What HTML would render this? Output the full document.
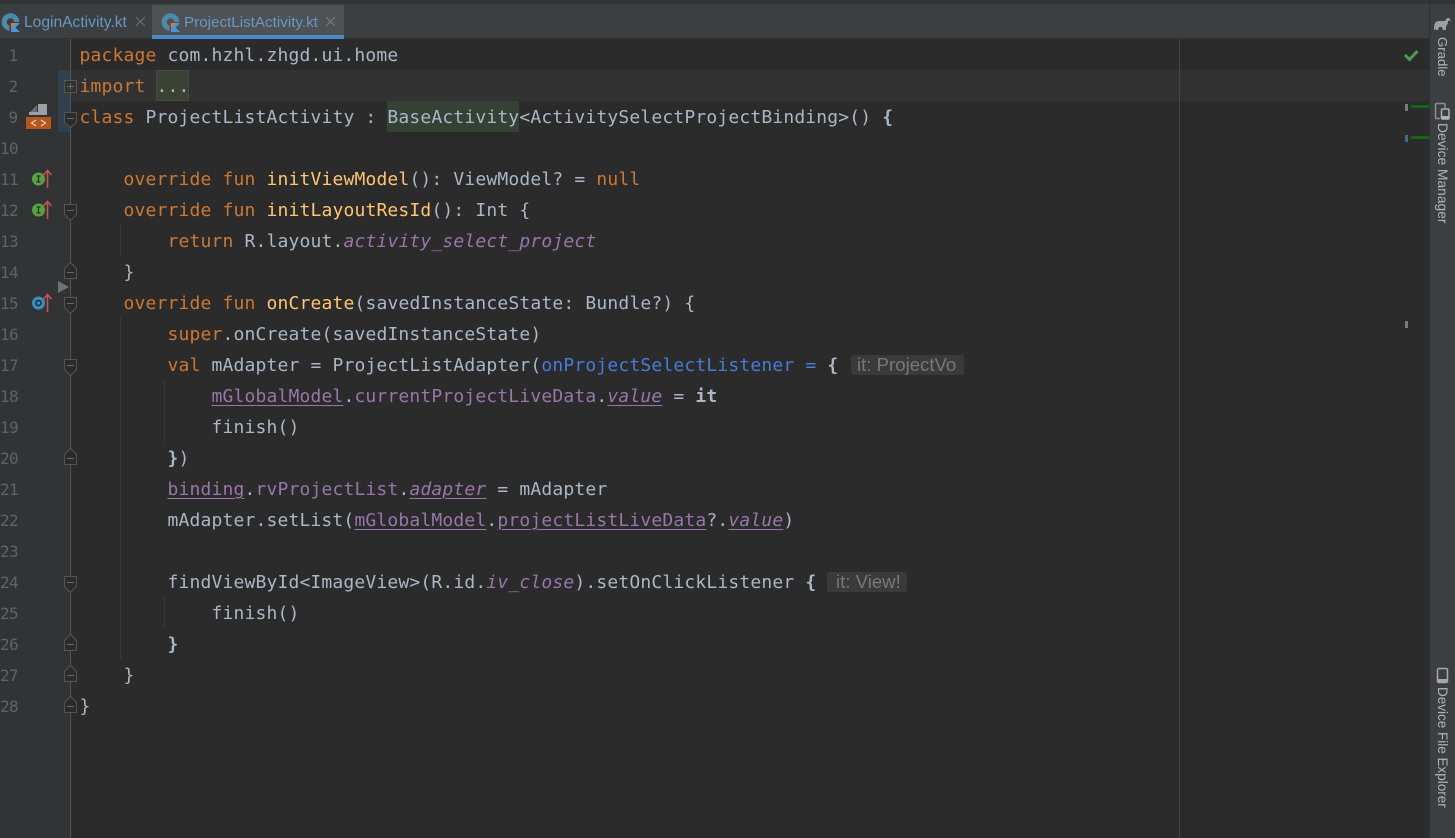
<!DOCTYPE html>
<html><head><meta charset="utf-8"><style>
html,body{margin:0;padding:0;background:#2b2b2b}
#r{position:relative;width:1455px;height:838px;overflow:hidden;background:#2b2b2b}
.a{position:absolute}
.l{position:absolute;left:79.5px;height:31px;line-height:31px;margin-top:1px;font-family:"DejaVu Sans Mono","Liberation Mono",monospace;font-size:18px;letter-spacing:.16px;color:#a9b7c6;white-space:pre}
.k{color:#cc7832}.f{color:#ffc66d}.p{color:#9876aa}.i{font-style:italic}.u{text-decoration:underline;text-underline-offset:3px;text-decoration-thickness:1px}
.b{font-weight:bold}.n{color:#467cda}
.g{position:absolute;width:17.5px;text-align:right;left:0;height:31px;line-height:31px;margin-top:1px;font-family:"DejaVu Sans Mono",monospace;font-size:16px;letter-spacing:-.6px;color:#606366}
.t{position:absolute;top:14px;font:15.6px/18px "Liberation Sans",sans-serif;color:#6a97c0;white-space:nowrap}
.h{position:absolute;height:20px;background:#3a3a3a;border-radius:3px;color:#787878;font:18.6px/20px "Liberation Sans",sans-serif;padding:0 6px;box-sizing:border-box;white-space:nowrap}
.v{position:absolute;writing-mode:vertical-rl;font:13.7px/14px "Liberation Sans",sans-serif;color:#b4b4b4;white-space:nowrap;left:1435px}
.ig{position:absolute;width:1px;background:#393939}
svg{position:absolute;overflow:visible}
</style></head><body><div id="r">

<div class="a" style="left:0;top:39px;width:71px;height:799px;background:#313335"></div>
<div class="a" style="left:71px;top:70px;width:1358px;height:31px;background:#323232"></div>
<div class="a" style="left:58px;top:70px;width:12px;height:62px;background:#2f414e"></div>
<div class="a" style="left:70px;top:39px;width:1px;height:799px;background:#555555"></div>
<div class="a" style="left:1179px;top:39px;width:1px;height:799px;background:#454545"></div>

<!-- top bar -->
<div class="a" style="left:0;top:0;width:1455px;height:5px;background:#323436"></div>
<div class="a" style="left:0;top:4px;width:1429px;height:35px;background:#3c3f41"></div>
<div class="a" style="left:0;top:38px;width:1429px;height:1px;background:#323232"></div>
<div class="a" style="left:152px;top:5px;width:192px;height:30px;background:#4e5254"></div>
<div class="a" style="left:152px;top:35px;width:192px;height:4px;background:#4a88c7"></div>
<div class="t" style="left:24px">LoginActivity.kt</div>
<div class="t" style="left:184px;font-size:15.2px">ProjectListActivity.kt</div>
<svg style="left:0;top:0" width="340" height="39">
<circle cx="10.500" cy="22" r="6.300" fill="none" stroke="#4a8ca8" stroke-width="5"/>
<rect x="9.500" y="22" width="11.500" height="11" fill="#3c3f41"/>
<path d="M11 23h9l-4.500 4.500 4.500 4.500h-9z" fill="#3d9ae0"/><path d="M11 23h5.500l-5.500 5.500z" fill="#e8703a"/><path d="M11 28.500l2 1.500-2 2z" fill="#c757bc"/>
<g transform="translate(160 0)">
<circle cx="10.500" cy="22" r="6.300" fill="none" stroke="#4a8ca8" stroke-width="5"/>
<rect x="9.500" y="22" width="11.500" height="11" fill="#4e5254"/>
<path d="M11 23h9l-4.500 4.500 4.500 4.500h-9z" fill="#3d9ae0"/><path d="M11 23h5.500l-5.500 5.500z" fill="#e8703a"/><path d="M11 28.500l2 1.500-2 2z" fill="#c757bc"/>
</g>
<path d="M136 17l9 9m0-9l-9 9" stroke="#6a6e70" stroke-width="1.200"/>
<path d="M326 17l9 9m0-9l-9 9" stroke="#797d80" stroke-width="1.200"/>
</svg>

<!-- right toolbar -->
<div class="a" style="left:1429px;top:4px;width:26px;height:834px;background:#3c3f41;border-left:1px solid #323232;box-sizing:border-box"></div>
<div class="v" style="top:37px;font-size:13.2px">Gradle</div>
<div class="v" style="top:123px;font-size:13.8px">Device Manager</div>
<div class="v" style="top:687px;font-size:13.5px">Device File Explorer</div>
<svg style="left:0;top:0" width="1455" height="838">
<path d="M1434 30c0-6 1-9 5-9h5c2 0 2-3 4-3 2 0 2.500 2 2.500 3h-1c-1-1-1.500-.5-1.500.5 0 2.500-1 3.500-2 4.500v4h-3l-1-3h-3l-1 3h-2l-.5-2-.5 2z" fill="#a0a0a0"/>
<rect x="1435.500" y="103.500" width="9.500" height="15" rx="1" fill="none" stroke="#8f8f8f" stroke-width="1.500"/>
<rect x="1440" y="108" width="10" height="12" rx="1" fill="#3c3f41"/>
<rect x="1441.500" y="109" width="7.500" height="10" rx="1" fill="none" stroke="#b0b0b0" stroke-width="1.500"/>
<rect x="1441.500" y="116" width="7.500" height="3" fill="#b0b0b0"/>
<rect x="1437.500" y="668.500" width="10" height="14" rx="1.500" fill="none" stroke="#a8a8a8" stroke-width="1.500"/>
<rect x="1438" y="679" width="9" height="3" fill="#a8a8a8"/>
<path d="M1405 55l4.500 4.500 8-8.500" fill="none" stroke="#499c54" stroke-width="3"/>
<rect x="1405" y="104" width="3" height="7" fill="#6e7a85"/>
<rect x="1411" y="105" width="18" height="3" fill="#0f6b12"/>
<rect x="1405" y="135" width="3" height="7" fill="#44698c"/>
<rect x="1411" y="136" width="18" height="3" fill="#0f6b12"/>
<rect x="1405" y="321" width="3" height="7" fill="#6e7a85"/>
<!-- gutter icons -->
<path d="M38 104h9v11H29v-3h9z" fill="#9aa0a6"/>
<path d="M30 112l7-7v7z" fill="#6b6f72"/>
<rect x="26" y="117" width="25" height="12" fill="#b8561d"/>
<path d="M36 120l-4.500 3 4.500 3M41 120l4.500 3-4.500 3" fill="none" stroke="#e8d8c8" stroke-width="1.100"/>
<circle cx="38.500" cy="179" r="6.500" fill="#59a33f"/><path d="M36.500 176h4M36.500 182h4M38.500 176v6" stroke="#2b2b2b" stroke-width="1.200"/><path d="M47.500 188v-17M43.500 175l4-4.500 4 4.500" fill="none" stroke="#c75450" stroke-width="1.600"/>
<g transform="translate(0 31)"><circle cx="38.500" cy="179" r="6.500" fill="#59a33f"/><path d="M36.500 176h4M36.500 182h4M38.500 176v6" stroke="#2b2b2b" stroke-width="1.200"/><path d="M47.500 188v-17M43.500 175l4-4.500 4 4.500" fill="none" stroke="#c75450" stroke-width="1.600"/></g>
<circle cx="38.500" cy="303" r="6.500" fill="#3592c4"/><circle cx="38.500" cy="303" r="2.600" fill="none" stroke="#2b2b2b" stroke-width="1.600"/><path d="M47.500 312v-17M43.500 299l4-4.500 4 4.500" fill="none" stroke="#c75450" stroke-width="1.600"/>
<path d="M58 281l11 6-11 6z" fill="#6b737c"/>
<!-- fold markers -->
<g fill="#2b2b2b" stroke="#555" stroke-width="1">
<rect x="64.500" y="80.500" width="12" height="12" fill="#323232"/>
<path d="M64.500 112.500h12v10l-6 5-6-5z"/>
<path d="M64.500 204.500h12v10l-6 6-6-6z"/>
<path d="M64.500 297.500h12v10l-6 6-6-6z"/>
<path d="M64.500 359.500h12v10l-6 6-6-6z"/>
<path d="M64.500 576.500h12v10l-6 6-6-6z"/>
<path d="M64.500 278.500h12v-10l-6-6-6 6z"/>
<path d="M64.500 464.500h12v-10l-6-6-6 6z"/>
<path d="M64.500 650.500h12v-10l-6-6-6 6z"/>
<path d="M64.500 681.500h12v-10l-6-6-6 6z"/>
<path d="M64.500 712.500h12v-10l-6-6-6 6z"/>
</g>
<path d="M67 86.500h7M70.500 83v7M67 118.500h7M67 210.500h7M67 303.500h7M67 365.500h7M67 582.500h7M67 272.500h7M67 458.500h7M67 644.500h7M67 675.500h7M67 706.500h7" stroke="#6a6a6a" stroke-width="1"/>
</svg>

<div class="ig" style="left:120px;top:225px;height:32px"></div>
<div class="ig" style="left:120px;top:318px;height:341px"></div>
<div class="ig" style="left:164px;top:380px;height:62px"></div>
<div class="ig" style="left:164px;top:597px;height:31px"></div>

<!-- code highlights -->
<div class="a" style="left:156px;top:70px;width:33px;height:31px;background:#3a4234;box-sizing:border-box;border:1px solid #454a45"></div>
<div class="a" style="left:387px;top:101px;width:132px;height:31px;background:#344134"></div>
<div class="h" style="left:851px;top:355px;width:113px">it: ProjectVo</div>
<div class="h" style="left:827px;top:572px;width:80px;padding-left:9px">it: View!</div>

<!-- line numbers -->
<div class="g" style="top:39px">1</div>
<div class="g" style="top:70px">2</div>
<div class="g" style="top:101px">9</div>
<div class="g" style="top:132px">10</div>
<div class="g" style="top:163px">11</div>
<div class="g" style="top:194px">12</div>
<div class="g" style="top:225px">13</div>
<div class="g" style="top:256px">14</div>
<div class="g" style="top:287px">15</div>
<div class="g" style="top:318px">16</div>
<div class="g" style="top:349px">17</div>
<div class="g" style="top:380px">18</div>
<div class="g" style="top:411px">19</div>
<div class="g" style="top:442px">20</div>
<div class="g" style="top:473px">21</div>
<div class="g" style="top:504px">22</div>
<div class="g" style="top:535px">23</div>
<div class="g" style="top:566px">24</div>
<div class="g" style="top:597px">25</div>
<div class="g" style="top:628px">26</div>
<div class="g" style="top:659px">27</div>
<div class="g" style="top:690px">28</div>

<!-- code -->
<div class="l" style="top:39px"><span class="k">package</span> com.hzhl.zhgd.ui.home</div>
<div class="l" style="top:70px"><span class="k">import</span> ...</div>
<div class="l" style="top:101px"><span class="k">class</span> ProjectListActivity : BaseActivity&lt;ActivitySelectProjectBinding&gt;() <span class="b">{</span></div>
<div class="l" style="top:163px">    <span class="k">override fun</span> <span class="f">initViewModel</span>(): ViewModel? = <span class="k">null</span></div>
<div class="l" style="top:194px">    <span class="k">override fun</span> <span class="f">initLayoutResId</span>(): Int {</div>
<div class="l" style="top:225px">        <span class="k">return</span> R.layout.<span class="p i">activity_select_project</span></div>
<div class="l" style="top:256px">    }</div>
<div class="l" style="top:287px">    <span class="k">override fun</span> <span class="f">onCreate</span>(savedInstanceState: Bundle?) {</div>
<div class="l" style="top:318px">        <span class="k">super</span>.onCreate(savedInstanceState)</div>
<div class="l" style="top:349px">        <span class="k">val</span> mAdapter = ProjectListAdapter(<span class="n">onProjectSelectListener =</span> <span class="b">{</span></div>
<div class="l" style="top:380px">            <span class="p u">mGlobalModel</span>.<span class="p">currentProjectLiveData</span>.<span class="p i u">value</span> = <span class="b">it</span></div>
<div class="l" style="top:411px">            finish()</div>
<div class="l" style="top:442px">        <span class="b">}</span>)</div>
<div class="l" style="top:473px">        <span class="p u">binding</span>.<span class="p">rvProjectList</span>.<span class="p i u">adapter</span> = mAdapter</div>
<div class="l" style="top:504px">        mAdapter.setList(<span class="p u">mGlobalModel</span>.<span class="p u">projectListLiveData</span>?.<span class="p i u">value</span>)</div>
<div class="l" style="top:566px">        findViewById&lt;ImageView&gt;(R.id.<span class="p i">iv_close</span>).setOnClickListener <span class="b">{</span></div>
<div class="l" style="top:597px">            finish()</div>
<div class="l" style="top:628px">        <span class="b">}</span></div>
<div class="l" style="top:659px">    }</div>
<div class="l" style="top:690px">}</div>
</div></body></html>
